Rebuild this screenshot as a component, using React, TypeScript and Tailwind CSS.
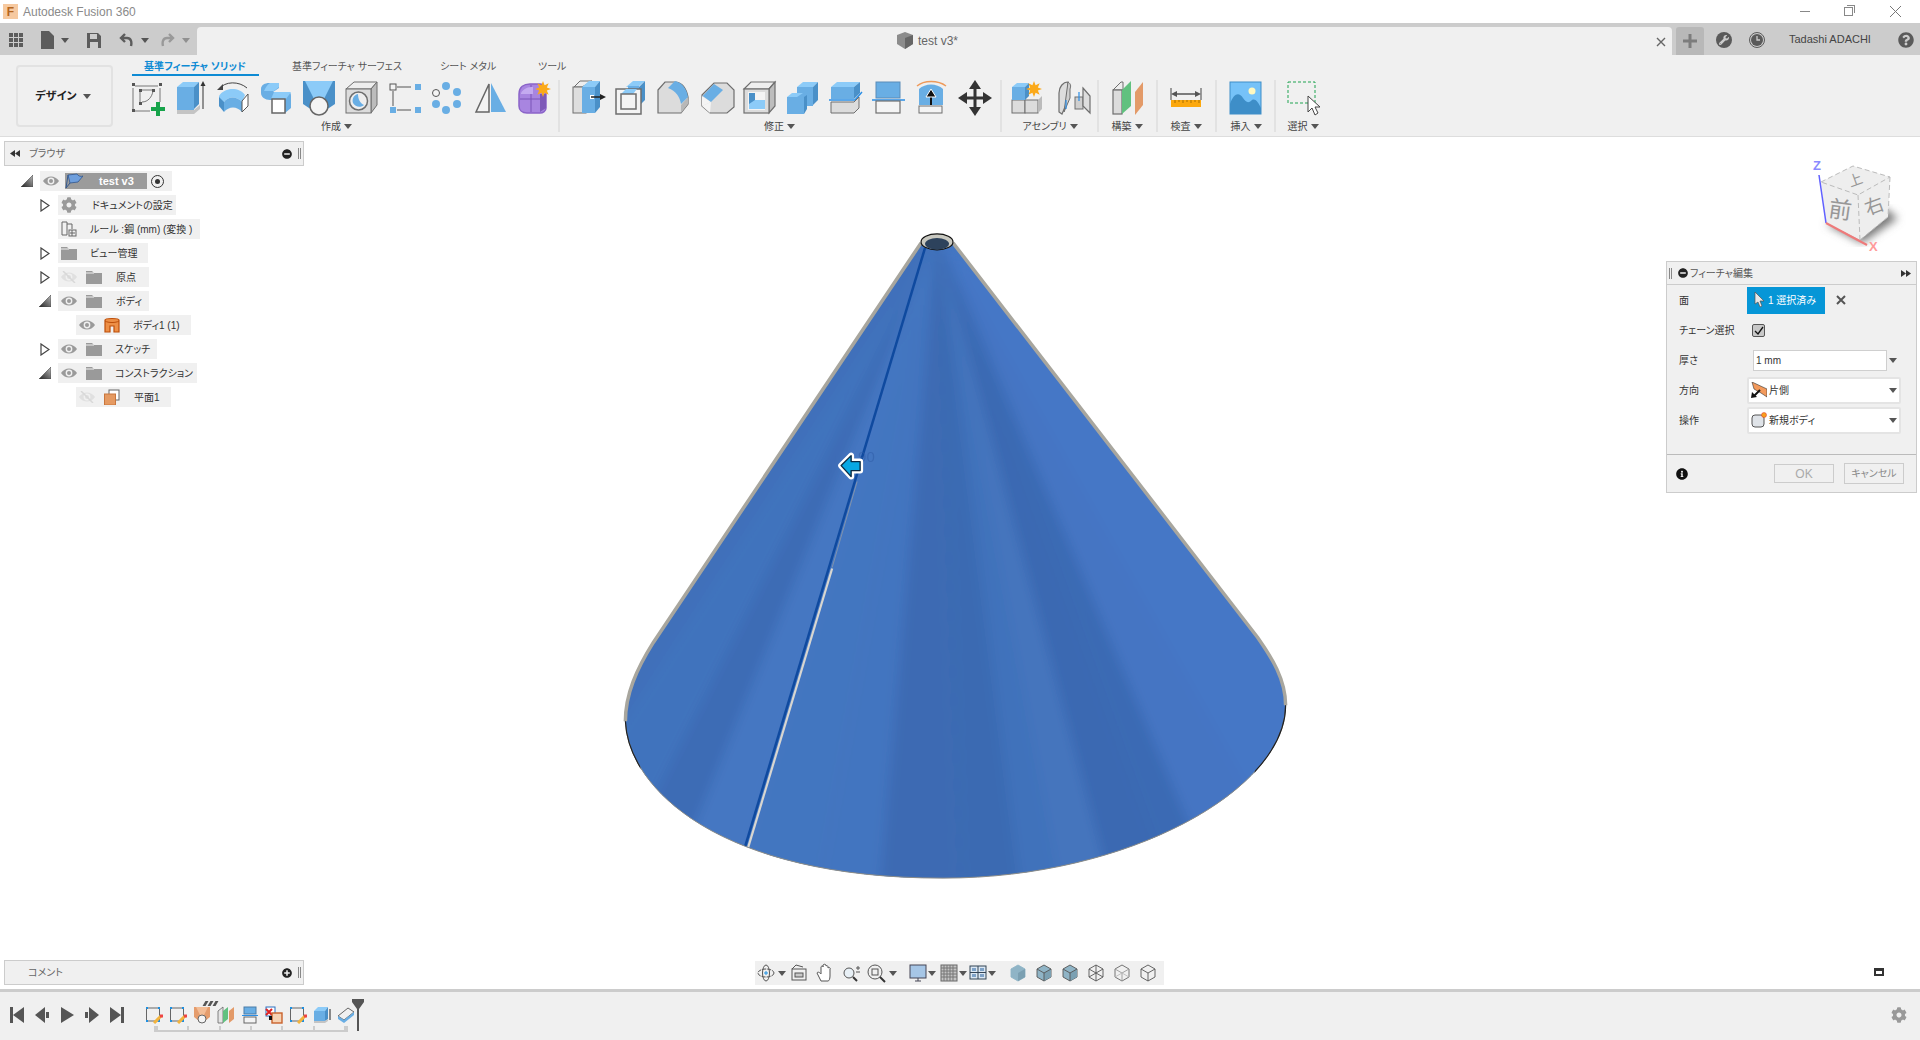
import React from "react";
import { FaCog, FaInfoCircle, FaMinusCircle, FaPlusCircle, FaQuestionCircle, FaWrench } from "react-icons/fa";

const B = "#69aee4";
const D = "#4a90c8";
const L = "#8ccbf8";
const G = "#6e6e6e";

const Ico = ({ children, s = 36, v = 36, className = "" }: { children: React.ReactNode; s?: number; v?: number; className?: string }) => (
    <svg width={s} height={s} viewBox={`0 0 ${v} ${v}`} className={`shrink-0 ${className}`}>
        {children}
    </svg>
);

const Star = ({ x, y, r }: { x: number; y: number; r: number }) => {
    const pts: string[] = [];
    for (let i = 0; i < 16; i++) {
        const a = (i * Math.PI) / 8;
        const q = i % 2 === 0 ? r : r * 0.52;
        pts.push(`${x + q * Math.cos(a)},${y + q * Math.sin(a)}`);
    }
    return <polygon points={pts.join(" ")} fill="#fba919" />;
};

const CREATE_ICONS = [
    <Ico key="sketch">
        <path d="M6 6H29M4 8V29M6 31H21M31 8V22" stroke="#777" fill="none" />
        <path d="M11 10H23M11 12V22M13 22C19 22 23 17 24 11" stroke="#777" fill="none" />
        {[[3, 3], [30, 3], [3, 29], [10, 9], [23, 9], [10, 22]].map(([x, y]) => (
            <rect key={`${x}-${y}`} x={x} y={y} width="3" height="3" fill="#555" />
        ))}
        <path d="M27 22h4v5h5v4h-5v5h-4v-5h-5v-4h5z" fill="#16a34a" />
    </Ico>,
    <Ico key="extrude">
        <polygon points="5,7 11,2 27,2 22,7" fill={L} />
        <polygon points="22,7 27,2 27,24 22,29" fill={D} />
        <rect x="5" y="7" width="17" height="23" fill={B} />
        <polygon points="5,30 22,30 28,25 28,29 22,34 5,34" fill="#c4c4c4" />
        <path d="M31 29V4" stroke="#333" />
        <polygon points="31,1 28.5,6 33.5,6" fill="#333" />
    </Ico>,
    <Ico key="revolve">
        <path d="M4 9C10 1 24 1 32 8" stroke="#444" fill="none" />
        <polygon points="2,10 8,4 8,10" fill="#444" />
        <path d="M4 16C10 7 24 7 30 15L27 22C22 16 13 16 9 22V30L4 26Z" fill={L} />
        <path d="M9 22C13 16 22 16 27 22V32C22 26 14 26 9 32Z" fill={B} />
        <path d="M4 17V26L9 32V22Z" fill={D} />
        <polygon points="27,21 33,14 33,26 27,32" fill="#fff" stroke="#555" />
    </Ico>,
    <Ico key="sweep">
        <path d="M3 9C3 5 7 3 11 3H21V8L15 12H29C33 12 33 14 33 16V28L27 33V20H12C7 20 3 17 3 13Z" fill={B} />
        <path d="M12 3H21V7L16 11H6C8 7 9 5 12 3Z" fill={L} />
        <path d="M16 12H33L28 19H13Z" fill={L} />
        <rect x="14" y="19" width="13" height="14" fill="#fff" stroke="#666" strokeWidth="1.5" />
    </Ico>,
    <Ico key="loft">
        <polygon points="2,1 34,1 34,24 25,30 11,30 2,24" fill={D} />
        <polygon points="4,1 32,1 23,19 13,19" fill={L} />
        <circle cx="18" cy="26" r="9" fill="#f4f4f4" stroke="#666" strokeWidth="1.5" />
    </Ico>,
    <Ico key="hole">
        <polygon points="2,9 10,2 33,2 27,9" fill="#eee" stroke={G} />
        <polygon points="27,9 33,2 33,25 27,33" fill="#bcbcbc" stroke={G} />
        <rect x="2" y="9" width="25" height="24" fill="#dcdcdc" stroke={G} />
        <circle cx="14.5" cy="21" r="9" fill="#eee" stroke={G} strokeWidth="1.5" />
        <path d="M14 14C9 15 8 20 9 23C11 27 17 28 20 25C16 23 14 19 14 14Z" fill={B} />
    </Ico>,
    <Ico key="rect-pattern">
        <rect x="3" y="4" width="6" height="6" fill="#f4f4f4" stroke="#555" />
        <rect x="28" y="4" width="6" height="6" fill={B} />
        <rect x="3" y="27" width="6" height="6" fill={B} />
        <rect x="28" y="27" width="6" height="6" fill={B} />
        <path d="M10 7H24M6 11V26M10 30H24" stroke="#555" />
    </Ico>,
    <Ico key="circ-pattern">
        <circle cx="6" cy="13" r="3.5" fill="#f4f4f4" stroke="#555" />
        <circle cx="16" cy="6" r="4" fill={B} />
        <circle cx="27" cy="12" r="4" fill={B} />
        <circle cx="27" cy="24" r="4" fill={B} />
        <circle cx="16" cy="30" r="4" fill={B} />
        <circle cx="6" cy="24" r="4" fill={B} />
    </Ico>,
    <Ico key="mirror">
        <polygon points="16,4 16,32 3,32" fill="#f4f4f4" stroke="#666" strokeWidth="1.5" />
        <polygon points="18,3 18,32 33,32" fill={B} />
    </Ico>,
    <Ico key="form">
        <path d="M3 14C3 7 8 4 14 4H24C27 4 30 7 30 12V28C30 31 27 33 24 33H11C6 33 3 30 3 26Z" fill="#a885e0" stroke="#8a63c8" strokeWidth="1.5" />
        <path d="M4 19H29M15 5V32" stroke="#7b55b8" />
        <path d="M5 13C8 8 12 7 17 7V14H5Z" fill="#c4aaf0" />
        <path d="M24 14H30V28L24 32Z" fill="#7d59b8" />
        <Star x={27} y={9} r={8} />
    </Ico>,
];

const MODIFY_ICONS = [
    <Ico key="press-pull">
        <polygon points="4,7 10,1 22,1 12,7" fill="#eee" stroke={G} />
        <rect x="3" y="7" width="13" height="26" fill="#dedede" stroke={G} />
        <polygon points="12,7 19,1 30,1 25,7" fill={L} />
        <polygon points="25,7 30,1 30,27 25,33" fill={D} />
        <rect x="12" y="7" width="13" height="26" fill={B} />
        <rect x="20" y="15" width="4" height="4" fill="#fff" />
        <path d="M21 17H31" stroke="#222" strokeWidth="1.5" />
        <polygon points="36,17 30,14 30,20" fill="#222" />
    </Ico>,
    <Ico key="fillet-shell">
        <polygon points="13,7 20,1 32,1 25,7" fill={L} />
        <polygon points="26,7 32,1 32,20 26,26" fill={D} />
        <rect x="15" y="6" width="11" height="20" fill={B} />
        <rect x="3" y="9" width="25" height="25" fill="#f4f4f4" stroke={G} strokeWidth="1.5" />
        <polygon points="8,14 13,9 24,9 20,14" fill={L} />
        <rect x="8" y="14" width="15" height="15" fill="#f4f4f4" stroke={G} strokeWidth="1.5" />
    </Ico>,
    <Ico key="fillet">
        <path d="M2 10L9 2H20C28 3 31 12 32 17V24L25 33H2Z" fill="#dcdcdc" stroke={G} strokeWidth="1.2" />
        <path d="M25 33V25L32 17V24Z" fill="#b8b8b8" />
        <path d="M12 8L19 1C27 3 31 10 32 17L25 24C24 17 20 11 12 8Z" fill={B} />
    </Ico>,
    <Ico key="chamfer">
        <path d="M3 15L15 3H28L35 10V27L28 33H11L3 26Z" fill="#dcdcdc" stroke={G} strokeWidth="1.2" />
        <polygon points="3,26 3,16 12,22" fill="#f4f4f4" />
        <polygon points="3,26 12,22 11,33" fill="#f4f4f4" />
        <polygon points="3.7,16 15,4 24,10 12,22" fill={B} />
    </Ico>,
    <Ico key="shell">
        <polygon points="2,9 9,2 33,2 27,9" fill="#eee" stroke={G} strokeWidth="1.2" />
        <polygon points="27,9 33,2 33,26 27,33" fill="#bdbdbd" stroke={G} strokeWidth="1.2" />
        <rect x="2" y="9" width="25" height="24" fill="#dcdcdc" stroke={G} strokeWidth="1.2" />
        <rect x="6" y="12" width="17" height="18" fill="#f4f4f4" />
        <rect x="7" y="13" width="6" height="11" fill={D} />
        <polygon points="7,24 13,20 23,20 23,29 7,29" fill={L} />
    </Ico>,
    <Ico key="combine">
        <polygon points="12,7 18,2 33,2 28,7" fill={L} />
        <polygon points="28,7 33,2 33,20 28,25" fill={D} />
        <rect x="12" y="7" width="16" height="19" fill={B} />
        <polygon points="2,17 7,13 18,13 12,17" fill={L} />
        <rect x="2" y="17" width="17" height="17" fill={B} />
        <polygon points="19,17 22,15 22,29 19,34" fill={D} />
    </Ico>,
    <Ico key="split-face">
        <polygon points="3,7 9,2 32,2 26,7" fill={L} />
        <polygon points="26,7 32,2 32,13 26,19" fill={D} />
        <rect x="3" y="7" width="23" height="12" fill={B} />
        <path d="M1 20H27L34 12" stroke="#2a8ee6" strokeWidth="1.5" fill="none" />
        <polygon points="3,22 26,22 31,17 31,28 26,33 3,33" fill="#dcdcdc" stroke={G} />
    </Ico>,
    <Ico key="split-body">
        <rect x="5" y="2" width="24" height="16" fill={B} stroke="#5a8cb8" />
        <path d="M1 20H34" stroke="#2a8ee6" strokeWidth="1.5" />
        <rect x="5" y="21" width="24" height="12" fill="#f4f4f4" stroke={G} strokeWidth="1.2" />
    </Ico>,
    <Ico key="offset">
        <path d="M3 6C10 0 24 0 32 6" stroke="#ee9a5b" strokeWidth="1.5" fill="none" />
        <path d="M5 25V9C11 3 23 3 29 9V25Z" fill={B} />
        <path d="M5 26H29" stroke="#fff" />
        <rect x="5" y="26" width="23" height="7" fill="#f4f4f4" stroke={G} />
        <path d="M17 25V15" stroke="#111" strokeWidth="2" />
        <polygon points="17,9 12,17 22,17" fill="#111" stroke="#fff" />
    </Ico>,
    <Ico key="move">
        <path d="M18 4V32M4 18H32" stroke="#333" strokeWidth="3" />
        <polygon points="18,0 12,9 24,9" fill="#333" />
        <polygon points="18,36 12,27 24,27" fill="#333" />
        <polygon points="1,18 10,12 10,24" fill="#333" />
        <polygon points="35,18 26,12 26,24" fill="#333" />
    </Ico>,
];

const ASSEMBLY_ICONS = [
    <Ico key="new-comp">
        <rect x="3" y="20" width="13" height="13" fill="#dcdcdc" stroke={G} />
        <rect x="16" y="20" width="13" height="13" fill="#dcdcdc" stroke={G} />
        <polygon points="29,20 33,16 33,29 29,33" fill="#bbb" />
        <polygon points="3,7 8,3 20,3 16,7" fill={L} />
        <polygon points="16,7 20,3 20,16 16,20" fill={D} />
        <rect x="3" y="7" width="13" height="13" fill={B} />
        <Star x={25} y={9} r={8} />
    </Ico>,
    <Ico key="joint">
        <path d="M4 32V13C4 7 8 2 13 2V20L7 34Z" fill="#ddd" stroke={G} strokeWidth="1.2" />
        <path d="M13 2C16 4 16 6 15 9V18L9 32Z" fill="#cfcfcf" stroke={G} />
        <rect x="20" y="17" width="8" height="12" fill="#cfcfcf" stroke={G} />
        <polygon points="28,8 35,16 35,33 28,26" fill="#ddd" stroke={G} strokeWidth="1.2" />
        <path d="M11 20V29M24 12V21" stroke="#2a8ee6" strokeWidth="1.2" />
    </Ico>,
];

const CONSTRUCT_ICON = (
    <Ico>
        <polygon points="4,10 12,2 14,2 14,10" fill="#eee" stroke={G} />
        <rect x="4" y="10" width="9" height="24" fill="#dcdcdc" stroke={G} strokeWidth="1.2" />
        <polygon points="13,10 22,1 22,26 13,34" fill="#61c17f" />
        <polygon points="26,12 34,2 34,25 26,35" fill="#e39a68" />
    </Ico>
);

const MEASURE_ICON = (
    <Ico>
        <path d="M3 8V20M33 8V20" stroke="#444" />
        <path d="M6 14H30" stroke="#555" strokeWidth="1.5" />
        <polygon points="3,14 9,11 9,17" fill="#555" />
        <polygon points="33,14 27,11 27,17" fill="#555" />
        <rect x="3" y="20" width="30" height="7" fill="#fca80d" />
        <path d="M7 20v3M11 20v2M15 20v3M19 20v2M23 20v3M27 20v2M31 20v3" stroke="#a76f00" />
    </Ico>
);

const INSERT_ICON = (
    <Ico>
        <rect x="2" y="2" width="31" height="32" fill="#76c2f8" />
        <circle cx="24" cy="11" r="3.5" fill="#fff8c0" />
        <path d="M2 24C6 13 11 12 15 18C18 22 20 24 24 20C28 18 31 24 33 28V34H2Z" fill="#3e8ec8" />
        <rect x="2" y="2" width="31" height="32" fill="none" stroke="#3e8ec8" />
    </Ico>
);

const SELECT_ICON = (
    <Ico>
        <rect x="3" y="2" width="27" height="21" fill="none" stroke="#1fa350" strokeDasharray="3 2" />
        <polygon points="23,16 23,32 27,28 30,35 33,33 30,27 35,27" fill="#fff" stroke="#444" />
    </Ico>
);

const Caret = ({ className = "" }: { className?: string }) => (
    <svg width="8" height="5" viewBox="0 0 8 5" className={`inline-block shrink-0 ${className}`}>
        <polygon points="0,0 8,0 4,5" fill="#555" />
    </svg>
);

const GROUPS = [
    { label: "作成", w: "w-[430px]", ml: "", icons: CREATE_ICONS, slot: "w-[43px]", div: "-right-[5px]", lbl: "pr-[7px]" },
    { label: "修正", w: "w-[430px]", ml: "ml-[11px]", icons: MODIFY_ICONS, slot: "w-[43px]", div: "-right-[6px]", lbl: "pr-[3px]" },
    { label: "アセンブリ", w: "w-[92px]", ml: "ml-[8px]", icons: ASSEMBLY_ICONS, slot: "w-[46px]", div: "-right-[3px]", lbl: "" },
    { label: "構築", w: "w-[54px]", ml: "ml-[4px]", icons: [CONSTRUCT_ICON], slot: "w-[54px]", div: "-right-[4px]", lbl: "" },
    { label: "検査", w: "w-[54px]", ml: "ml-[5px]", icons: [MEASURE_ICON], slot: "w-[54px]", div: "-right-[4px]", lbl: "" },
    { label: "挿入", w: "w-[54px]", ml: "ml-[6px]", icons: [INSERT_ICON], slot: "w-[54px]", div: "-right-[3px]", lbl: "" },
    { label: "選択", w: "w-[54px]", ml: "ml-[3px]", icons: [SELECT_ICON], slot: "w-[54px]", div: "hidden", lbl: "" },
];

const TitleBar = () => (
    <div className="flex h-[23px] items-center bg-white">
        <div className="ml-[3px] flex h-[15px] w-[15px] items-center justify-center bg-[#f6c9a0] text-[12px] font-bold text-[#b5651d]">F</div>
        <span className="ml-[5px] text-[12px] text-[#8a8a8a]">Autodesk Fusion 360</span>
        <div className="ml-auto flex items-center text-[#777]">
            <div className="h-px w-[10px] bg-[#888]" />
            <div className="relative ml-[34px] h-[9px] w-[9px] border border-[#888]">
                <div className="absolute -right-[3px] -top-[3px] h-[8px] w-[8px] border-r border-t border-[#888]" />
            </div>
            <svg width="11" height="11" viewBox="0 0 11 11" className="ml-[37px] mr-[19px]">
                <path d="M0 0L11 11M11 0L0 11" stroke="#777" />
            </svg>
        </div>
    </div>
);

const TabRow = () => (
    <div className="flex h-[28px] bg-[#cccccc]">
        <div className="flex w-[197px] items-center pb-[2px] text-[#666]">
            <svg width="14" height="14" viewBox="0 0 14 14" className="ml-[9px]" fill="#5c5c5c">
                {[0, 5, 10].flatMap((x) => [0, 5, 10].map((y) => <rect key={`${x}${y}`} x={x} y={y} width="4" height="4" />))}
            </svg>
            <svg width="14" height="18" viewBox="0 0 14 18" className="ml-[18px]" fill="#5c5c5c">
                <path d="M0 0H8L13 5V18H0Z" />
            </svg>
            <Caret className="ml-[6px]" />
            <svg width="14" height="15" viewBox="0 0 14 15" className="ml-[18px]" fill="#5c5c5c">
                <path d="M0 0H11L14 3V15H0ZM3 1V6H10V1ZM3 9V15H11V9Z" fillRule="evenodd" />
            </svg>
            <svg width="14" height="14" viewBox="0 0 14 14" className="ml-[18px]" fill="none" stroke="#5c5c5c" strokeWidth="2.4">
                <path d="M6 1L2 5L6 9M2 5H8C12 5 13 9 12 13" />
            </svg>
            <Caret className="ml-[8px]" />
            <svg width="14" height="14" viewBox="0 0 14 14" className="ml-[12px]" fill="none" stroke="#999" strokeWidth="2.4">
                <path d="M8 1L12 5L8 9M12 5H6C2 5 1 9 2 13" />
            </svg>
            <Caret className="ml-[7px] opacity-50" />
        </div>
        <div className="relative flex w-[1475px] items-center justify-center rounded-t-[4px] bg-[#f0f0f0] pb-[1px] pr-[14px]">
            <svg width="16" height="17" viewBox="0 0 16 17">
                <polygon points="0,3 8,0 16,3 16,12 8,17 0,12" fill="#8c8c8c" />
                <polygon points="8,6 16,3 16,12 8,17" fill="#666" />
            </svg>
            <span className="ml-[5px] text-[12px] text-[#666]">test v3*</span>
            <svg width="10" height="10" viewBox="0 0 10 10" className="absolute right-[6px] top-[10px]">
                <path d="M1 1L9 9M9 1L1 9" stroke="#666" strokeWidth="1.4" />
            </svg>
        </div>
        <div className="ml-[4px] flex w-[28px] items-center justify-center rounded-t-[3px] bg-[#b8b8b8]">
            <svg width="14" height="14" viewBox="0 0 14 14">
                <path d="M7 0V14M0 7H14" stroke="#7c7c7c" strokeWidth="3" />
            </svg>
        </div>
        <div className="flex flex-1 items-center pb-[3px] text-[#5a5a5a]">
            <div className="ml-[12px] flex h-4 w-4 items-center justify-center rounded-full bg-[#5a5a5a]">
                <FaWrench size={10} color="#ccc" />
            </div>
            <svg width="16" height="16" viewBox="0 0 16 16" className="ml-[17px]">
                <circle cx="8" cy="8" r="7.5" fill="none" stroke="#5a5a5a" />
                <circle cx="8" cy="8" r="6" fill="#5a5a5a" />
                <path d="M8 4V8H11" stroke="#ccc" strokeWidth="1.3" fill="none" />
            </svg>
            <span className="ml-[24px] text-[11px] text-[#444]">Tadashi ADACHI</span>
            <FaQuestionCircle size={16} color="#5a5a5a" className="ml-[27px]" />
        </div>
    </div>
);

const Ribbon = () => (
    <div className="flex h-[82px] border-b border-[#dddddd] bg-[#f0f0f0]">
        <div className="ml-[16px] mt-[10px] flex h-[62px] w-[97px] items-center justify-center gap-[6px] rounded-[4px] border-2 border-[#e2e2e2] pr-[3px] text-[11px] font-bold text-[#222]">
            デザイン
            <Caret />
        </div>
        <div className="ml-[12px] flex flex-col">
            <div className="relative flex h-[25px] items-center pb-[3px] text-[10px] text-[#555]">
                <span className="ml-[19px] w-[102px] whitespace-nowrap font-bold text-[#0e8bd4]">基準フィーチャ ソリッド</span>
                <span className="ml-[46px] w-[102px] whitespace-nowrap">基準フィーチャ サーフェス</span>
                <span className="ml-[46px] w-[52px] whitespace-nowrap">シート メタル</span>
                <span className="ml-[46px] whitespace-nowrap">ツール</span>
                <div className="absolute left-[7px] top-[19px] h-[2px] w-[127px] bg-[#0e8bd4]" />
            </div>
            <div className="flex">
                {GROUPS.map((g) => (
                    <div key={g.label} className={`relative flex shrink-0 flex-col ${g.w} ${g.ml}`}>
                        <div className="flex h-[36px] items-center">
                            {g.icons.map((icon, n) => (
                                <div key={n} className={`flex shrink-0 justify-center ${g.slot}`}>
                                    {icon}
                                </div>
                            ))}
                        </div>
                        <div className={`mt-[3px] flex h-[14px] items-center justify-center gap-[3px] text-[10px] text-[#444] ${g.lbl}`}>
                            {g.label}
                            <Caret />
                        </div>
                        <div className={`absolute top-0 h-[52px] w-[2px] bg-[#e2e2e2] ${g.div}`} />
                    </div>
                ))}
            </div>
        </div>
    </div>
);

const Eye = ({ off = false }: { off?: boolean }) => (
    <svg width="16" height="12" viewBox="0 0 16 12" className="shrink-0">
        <path d="M0 6C4 0 12 0 16 6C12 12 4 12 0 6Z" fill={off ? "#e0e0e0" : "#9a9a9a"} />
        <circle cx="8" cy="6" r="3.4" fill="#f0f0f0" />
        <circle cx="8" cy="6" r="2" fill={off ? "#e0e0e0" : "#9a9a9a"} />
        {off && <path d="M2 0L14 12" stroke="#d8d8d8" strokeWidth="1.5" />}
    </svg>
);

const Folder = () => (
    <svg width="16" height="13" viewBox="0 0 16 13" className="shrink-0">
        <path d="M0 0H6L8 2H16V13H0Z" fill="#9a9a9a" />
        <path d="M0 2H8" stroke="#f0f0f0" />
    </svg>
);

const Arrow = ({ open }: { open: boolean }) =>
    open ? (
        <svg width="12" height="12" viewBox="0 0 12 12" className="shrink-0">
            <defs>
                <linearGradient id="tri" x1="0" y1="1" x2="1" y2="0">
                    <stop offset="0" stopColor="#222" />
                    <stop offset="1" stopColor="#bbb" />
                </linearGradient>
            </defs>
            <polygon points="0,12 12,0 12,12" fill="url(#tri)" stroke="#444" strokeWidth="0.6" />
        </svg>
    ) : (
        <svg width="10" height="13" viewBox="0 0 10 13" className="mx-px shrink-0">
            <polygon points="1,1 9,6.5 1,12" fill="#fff" stroke="#444" strokeWidth="1.2" />
        </svg>
    );

const BodyIcon = () => (
    <svg width="16" height="16" viewBox="0 0 16 16" className="shrink-0">
        <path d="M1 3C1 1 15 1 15 3V15H10V9H6V15H1Z" fill="#ed8f46" stroke="#bd4e09" strokeWidth="1.2" />
        <path d="M1 4C4 6 12 6 15 4" stroke="#bd4e09" fill="none" />
    </svg>
);

const PlaneIcon = () => (
    <svg width="16" height="16" viewBox="0 0 16 16" className="shrink-0">
        <rect x="5" y="1" width="10" height="10" fill="#fff" stroke="#666" />
        <rect x="0.5" y="5" width="11" height="11" fill="#e59a62" stroke="#c9763d" />
    </svg>
);

const RuleIcon = () => (
    <svg width="16" height="16" viewBox="0 0 16 16" className="shrink-0" fill="none" stroke="#666">
        <path d="M1 1H6V14H1ZM6 3H11V8" />
        <rect x="8" y="9" width="7" height="6" fill="#f0f0f0" />
        <path d="M9 12H14M11 9V15" />
    </svg>
);

const RootIcon = () => (
    <svg width="18" height="16" viewBox="0 0 18 16" className="shrink-0">
        <path d="M3 2L12 1C13 3 16 4 18 3L13 9L5 10Z" fill="#6f9fdd" stroke="#31578f" strokeWidth="0.8" />
        <path d="M3 2L1 15M5 10L1 15" stroke="#31578f" />
    </svg>
);

const TREE = [
    { id: "doc", arrow: false, indent: "ml-[35px]", w: "w-[118px]", icon: <FaCog size={16} color="#9a9a9a" className="shrink-0" />, eye: null, label: "ドキュメントの設定", text: "ml-[15px]" },
    { id: "rule", arrow: null, indent: "ml-[54px]", w: "w-[142px]", icon: <RuleIcon />, eye: null, label: "ルール :鋼 (mm) (変換 )", text: "ml-[13px]" },
    { id: "view", arrow: false, indent: "ml-[35px]", w: "w-[90px]", icon: <Folder />, eye: null, label: "ビュー管理", text: "ml-[13px]" },
    { id: "origin", arrow: false, indent: "ml-[35px]", w: "w-[91px]", icon: <Folder />, eye: "off", label: "原点", text: "ml-[14px]" },
    { id: "bodies", arrow: true, indent: "ml-[35px]", w: "w-[91px]", icon: <Folder />, eye: "on", label: "ボディ", text: "ml-[14px]" },
    { id: "body", arrow: null, indent: "ml-[72px]", w: "w-[115px]", icon: <BodyIcon />, eye: "on", label: "ボディ1 (1)", text: "ml-[13px]" },
    { id: "sketch", arrow: false, indent: "ml-[35px]", w: "w-[99px]", icon: <Folder />, eye: "on", label: "スケッチ", text: "ml-[13px]" },
    { id: "con", arrow: true, indent: "ml-[35px]", w: "w-[139px]", icon: <Folder />, eye: "on", label: "コンストラクション", text: "ml-[13px]" },
    { id: "plane", arrow: null, indent: "ml-[72px]", w: "w-[95px]", icon: <PlaneIcon />, eye: "off", label: "平面1", text: "ml-[14px]" },
];

const PanelHandle = () => <div className="ml-[6px] h-[11px] w-[3px] border-x border-[#888]" />;

const BrowserPanel = () => (
    <div className="absolute left-[4px] top-[4px] w-[300px] text-[10px] text-[#333]">
        <div className="flex h-[25px] items-center border border-[#cccccc] bg-[#f0f0f0] pl-[5px] pr-[2px] text-[#666]">
            <svg width="10" height="7" viewBox="0 0 10 7">
                <polygon points="5,0 0,3.5 5,7" fill="#333" />
                <polygon points="10,0 5,3.5 10,7" fill="#333" />
            </svg>
            <span className="ml-[9px]">ブラウザ</span>
            <FaMinusCircle size={10} color="#222" className="ml-auto" />
            <PanelHandle />
        </div>
        <div className="mt-[5px] flex flex-col gap-[4px]">
            <div className="flex h-[20px] items-center">
                <div className="ml-[17px] w-[19px]">
                    <Arrow open />
                </div>
                <div className="flex h-[20px] w-[132px] items-center bg-[#f0f0f0] pl-[3px]">
                    <Eye />
                    <div className="ml-[6px] flex h-[16px] w-[82px] items-center bg-[#9b9b9b]">
                        <RootIcon />
                        <span className="ml-[16px] text-[11px] font-bold text-white">test v3</span>
                    </div>
                    <div className="ml-[4px] flex h-[13px] w-[13px] items-center justify-center rounded-full border border-[#333]">
                        <div className="h-[5px] w-[5px] rounded-full bg-[#333]" />
                    </div>
                </div>
            </div>
            {TREE.map((row) => (
                <div key={row.id} className="flex h-[20px] items-center">
                    <div className={`flex items-center ${row.indent}`}>
                        {row.arrow !== null && (
                            <div className="w-[19px]">
                                <Arrow open={row.arrow} />
                            </div>
                        )}
                    </div>
                    <div className={`flex h-[20px] items-center bg-[#f0f0f0] pl-[3px] ${row.w}`}>
                        {row.eye && <Eye off={row.eye === "off"} />}
                        <div className={row.eye ? "ml-[9px]" : ""}>{row.icon}</div>
                        <span className={`${row.text} whitespace-nowrap`}>{row.label}</span>
                    </div>
                </div>
            ))}
        </div>
    </div>
);

const CommentPanel = () => (
    <div className="absolute left-[4px] top-[823px] flex h-[25px] w-[300px] items-center border border-[#cccccc] bg-[#f0f0f0] pl-[23px] pr-[2px] text-[10px] text-[#666]">
        コメント
        <FaPlusCircle size={10} color="#222" className="ml-auto" />
        <PanelHandle />
    </div>
);

const DirectionIcon = () => (
    <svg width="16" height="16" viewBox="0 0 16 16" className="shrink-0">
        <polygon points="1,0 16,7 16,15 10,11 3,7" fill="#f39a5c" stroke="#333" strokeWidth="0.6" />
        <path d="M9 8L3 14" stroke="#111" strokeWidth="2" />
        <polygon points="0,16 6,15 1,10" fill="#111" />
    </svg>
);

const NewBodyIcon = () => (
    <svg width="16" height="16" viewBox="0 0 16 16" className="shrink-0">
        <rect x="1" y="3" width="12" height="12" rx="3" fill="#dfe3e8" stroke="#555" />
        <circle cx="13" cy="3" r="2.5" fill="#f9a01b" stroke="#d33" strokeWidth="0.5" />
    </svg>
);

const FeatureRow = ({ label, children }: { label: string; children: React.ReactNode }) => (
    <div className="flex h-[30px] items-center pl-[12px]">
        <span className="w-[68px] shrink-0">{label}</span>
        {children}
    </div>
);

const Select = ({ icon, text }: { icon: React.ReactNode; text: string }) => (
    <div className="flex h-[27px] w-[154px] items-center rounded-[2px] border-2 border-[#e4e4e4] bg-white pl-[2px] pr-[2px]">
        {icon}
        <span className="ml-[2px]">{text}</span>
        <Caret className="ml-auto" />
    </div>
);

const FeaturePanel = () => (
    <div className="absolute left-[1666px] top-[124px] flex h-[232px] w-[251px] flex-col border border-[#cccccc] bg-[#f0f0f0] text-[10px] text-[#333]">
        <div className="flex h-[23px] shrink-0 items-center border-b border-[#cccccc] pl-[2px] pr-[5px] text-[#555]">
            <div className="h-[11px] w-[3px] border-x border-[#888]" />
            <FaMinusCircle size={10} color="#222" className="ml-[6px]" />
            <span className="ml-[2px]">フィーチャ編集</span>
            <svg width="10" height="7" viewBox="0 0 10 7" className="ml-auto">
                <polygon points="0,0 5,3.5 0,7" fill="#333" />
                <polygon points="5,0 10,3.5 5,7" fill="#333" />
            </svg>
        </div>
        <FeatureRow label="面">
            <div className="flex h-[27px] w-[78px] items-center bg-[#0696d7] pl-[7px] text-white">
                <svg width="11" height="16" viewBox="0 0 11 16">
                    <polygon points="1,0 1,12 4,10 6,15 8,14 6,9 10,9" fill="#e8e8e8" stroke="#555" strokeWidth="0.7" />
                </svg>
                <span className="ml-[3px] whitespace-nowrap">1 選択済み</span>
            </div>
            <svg width="10" height="10" viewBox="0 0 10 10" className="ml-[11px]">
                <path d="M1 1L9 9M9 1L1 9" stroke="#555" strokeWidth="2" />
            </svg>
        </FeatureRow>
        <FeatureRow label="チェーン選択">
            <div className="ml-[5px] flex h-[13px] w-[13px] items-center justify-center rounded-[2px] border border-[#555] bg-[#c8c8c8]">
                <svg width="10" height="9" viewBox="0 0 10 9">
                    <path d="M1 5L4 8L9 1" stroke="#111" fill="none" strokeWidth="1.3" />
                </svg>
            </div>
        </FeatureRow>
        <FeatureRow label="厚さ">
            <div className="ml-[6px] flex h-[21px] w-[134px] items-center border border-[#cfcfcf] bg-white pl-[2px]">1 mm</div>
            <Caret className="ml-[2px]" />
        </FeatureRow>
        <FeatureRow label="方向">
            <Select icon={<DirectionIcon />} text="片側" />
        </FeatureRow>
        <FeatureRow label="操作">
            <Select icon={<NewBodyIcon />} text="新規ボディ" />
        </FeatureRow>
        <div className="mt-[19px] flex flex-1 items-center border-t border-[#bbbbbb] pl-[9px]">
            <FaInfoCircle size={12} color="#111" />
            <div className="ml-[86px] flex h-[19px] w-[60px] items-center justify-center border border-[#cccccc] text-[12px] text-[#aaa]">OK</div>
            <div className="ml-[10px] flex h-[21px] w-[60px] items-center justify-center border border-[#cccccc] text-[#888]">キャンセル</div>
        </div>
    </div>
);

const NavIcon = ({ children, className = "" }: { children: React.ReactNode; className?: string }) => (
    <svg width="20" height="20" viewBox="0 0 20 20" className={`shrink-0 ${className}`}>
        {children}
    </svg>
);

const NavCube = ({ fill, wire, className }: { fill: boolean; wire: boolean; className: string }) => (
    <NavIcon className={className}>
        <polygon points="10,2 17,6 17,14 10,18 3,14 3,6" fill={fill ? "#8fb4c6" : "none"} stroke={wire ? "#555" : fill ? "#8fb4c6" : "#555"} strokeWidth="0.9" />
        {fill && <polygon points="10,10 17,6 17,14 10,18" fill="#7ba0b2" />}
        {wire && <path d="M3 6L10 10L17 6M10 10V18" stroke="#555" strokeWidth="0.9" fill="none" />}
    </NavIcon>
);

const BottomNav = () => (
    <div className="absolute left-[755px] top-[824px] flex h-[24px] w-[409px] items-center bg-[#f0f0f0] pl-px">
        <NavIcon>
            <ellipse cx="10" cy="10" rx="8" ry="4" fill="none" stroke="#555" strokeDasharray="4 1" />
            <ellipse cx="10" cy="10" rx="3.5" ry="8" fill="none" stroke="#555" />
            <path d="M8 10H12M10 8V12" stroke="#1d8fe0" />
        </NavIcon>
        <Caret className="ml-[2px]" />
        <NavIcon className="ml-[3px]">
            <rect x="3" y="6" width="14" height="11" fill="none" stroke="#555" />
            <rect x="6" y="10" width="8" height="4" fill="#c8c8c8" stroke="#555" />
            <path d="M3 6L7 2L14 4" stroke="#555" fill="none" />
        </NavIcon>
        <NavIcon className="ml-[6px]">
            <path d="M6 18L2 10C3 8 5 10 6 11V4C7 2 8 3 8 4V2C9 1 10 1 11 2V3C12 2 13 3 13 4V5C14 4 16 5 15 6V13C15 16 14 18 13 18Z" fill="#fff" stroke="#555" />
        </NavIcon>
        <NavIcon className="ml-[6px]">
            <circle cx="8" cy="10" r="5" fill="#e8f0f6" stroke="#555" />
            <path d="M12 14L16 18" stroke="#333" strokeWidth="2" />
            <path d="M15 5H19M17 3V7M15 9H19" stroke="#555" />
        </NavIcon>
        <NavIcon className="ml-[5px]">
            <circle cx="9" cy="9" r="7" fill="none" stroke="#555" />
            <rect x="6" y="6" width="6" height="6" fill="none" stroke="#555" />
            <path d="M14 14L19 19" stroke="#333" strokeWidth="2" />
        </NavIcon>
        <Caret className="ml-[3px]" />
        <NavIcon className="ml-[11px]">
            <rect x="2" y="2" width="16" height="13" fill="#a6c6e6" stroke="#445" />
            <path d="M7 18H13M10 15V18" stroke="#445" />
        </NavIcon>
        <Caret />
        <NavIcon className="ml-[3px]">
            <rect x="2" y="2" width="16" height="16" fill="#c4c4c4" stroke="#666" />
            <path d="M5 2V18M8 2V18M11 2V18M14 2V18M2 5H18M2 8H18M2 11H18M2 14H18" stroke="#777" />
        </NavIcon>
        <Caret />
        <NavIcon className="ml-px">
            <rect x="2" y="3" width="16" height="13" fill="#dbe7f3" stroke="#345" />
            <path d="M10 3V16M2 9.5H18" stroke="#345" />
            <rect x="4" y="5" width="4" height="3" fill="#7ea2c8" />
            <rect x="12" y="5" width="4" height="3" fill="#7ea2c8" />
            <rect x="4" y="11" width="4" height="3" fill="#7ea2c8" />
            <rect x="12" y="11" width="4" height="3" fill="#7ea2c8" />
        </NavIcon>
        <Caret />
        <NavCube fill wire={false} className="ml-[12px]" />
        <NavCube fill wire className="ml-[6px]" />
        <NavCube fill wire className="ml-[6px]" />
        <NavIcon className="ml-[6px]">
            <polygon points="10,2 17,6 17,14 10,18 3,14 3,6" fill="none" stroke="#555" strokeWidth="0.9" />
            <path d="M3 6L17 14M17 6L3 14M10 2V18" stroke="#555" strokeWidth="0.9" />
        </NavIcon>
        <NavIcon className="ml-[6px]">
            <polygon points="10,2 17,6 17,14 10,18 3,14 3,6" fill="none" stroke="#666" strokeWidth="0.9" />
            <path d="M3 6L10 10L17 6M10 10V18" stroke="#999" strokeWidth="0.9" fill="none" />
            <path d="M3 14L10 10L17 14" stroke="#bbb" strokeWidth="0.9" fill="none" />
        </NavIcon>
        <NavCube fill={false} wire className="ml-[6px]" />
    </div>
);

const BANDS: [number, string][] = [
    [-500, "#3f70ba"],
    [520, "#4073bd"],
    [610, "#3c6cb5"],
    [670, "#4477c2"],
    [736, "#4376c0"],
    [820, "#4275c0"],
    [880, "#3c6bb3"],
    [960, "#3b6ab2"],
    [1020, "#4172bb"],
    [1060, "#4574bd"],
    [1110, "#3a69b2"],
    [1170, "#3b6bb4"],
    [1215, "#4475c3"],
    [1300, "#4477c6"],
    [1800, "#4679c8"],
];

const CONE_PATH = "M921 243L653 643C636 670 625 695 625 722C628 790 720 879 943 879C1130 879 1286 790 1286 706C1286 680 1272 658 1258 638L953 243Z";
const BASE_PATH = "M625 722C628 790 720 879 943 879C1130 879 1286 790 1286 706";

const Cone = () => (
    <svg viewBox="0 137 1920 853" className="absolute inset-0 h-full w-full">
        <defs>
            <clipPath id="coneClip">
                <path d={CONE_PATH} />
            </clipPath>
            <clipPath id="edgeClip">
                <rect x="600" y="700" width="40" height="90" />
                <rect x="1255" y="680" width="50" height="100" />
            </clipPath>
            <filter id="soft" x="-10%" y="-10%" width="120%" height="120%">
                <feGaussianBlur stdDeviation="6" />
            </filter>
        </defs>
        <g clipPath="url(#coneClip)">
            <rect x="600" y="230" width="720" height="660" fill="#4074be" />
            <g filter="url(#soft)">
                {BANDS.slice(0, -1).map(([x, c], i) => (
                    <polygon key={x} points={`937,235 ${x},885 ${BANDS[i + 1][0]},885`} fill={c} />
                ))}
            </g>
        </g>
        <path d="M925 248L745 847" stroke="#0f4a9f" strokeWidth="2.5" />
        <path d="M857 482L832 568" stroke="#a9a69f" strokeWidth="1" opacity="0.6" />
        <path d="M832 569L748 848" stroke="#d8d6d0" strokeWidth="2.2" />
        <path d="M921 243L653 643C636 670 625 695 625 722" stroke="#a8a69e" strokeWidth="3.5" fill="none" />
        <path d="M953 243L1258 638C1272 658 1286 680 1286 706" stroke="#a8a69e" strokeWidth="3.5" fill="none" />
        <path d={BASE_PATH} stroke="#8d8d88" strokeWidth="1" fill="none" />
        <path d={BASE_PATH} stroke="#222" strokeWidth="1.2" fill="none" clipPath="url(#edgeClip)" />
        <ellipse cx="937" cy="242" rx="16" ry="8" fill="#c8c8c0" stroke="#111" strokeWidth="1.2" />
        <ellipse cx="937" cy="244" rx="12" ry="6" fill="#2d425c" />
        <text x="858" y="462" fontSize="15" fill="#2f5da8" opacity="0.55" fontFamily="Liberation Sans, sans-serif">90</text>
        <path d="M841 466L851 456V462H860V471H851V477Z" fill="none" stroke="#fff" strokeWidth="6" strokeLinejoin="round" />
        <path d="M841 466L851 456V462H860V471H851V477Z" fill="#08a8e4" stroke="#0b2b44" strokeWidth="1.4" strokeLinejoin="round" />
    </svg>
);

const ViewCube = () => (
    <svg viewBox="1810 137 110 120" className="absolute left-[1810px] top-0 h-[120px] w-[110px]">
        <defs>
            <filter id="cubeShadow">
                <feGaussianBlur stdDeviation="4" />
            </filter>
        </defs>
        <polygon points="1826,224 1862,243 1898,218 1884,208" fill="#777" filter="url(#cubeShadow)" />
        <polygon points="1821,182 1853,166 1890,177 1888,217 1860,240 1826,223" fill="#eeeeee" />
        <path d="M1821 182L1853 166L1890 177L1858 195ZM1858 195L1860 240M1890 177L1888 217L1860 240" fill="none" stroke="#bbb" strokeDasharray="5 3" />
        <path d="M1826 223L1819 175" stroke="#6060ff" strokeWidth="1.5" />
        <path d="M1826 223L1867 245" stroke="#ee7a7a" strokeWidth="2" />
        <text x="1813" y="170" fontSize="13" fill="#8a8aff" fontFamily="Liberation Sans, sans-serif" fontWeight="bold">Z</text>
        <text x="1869" y="251" fontSize="13" fill="#ff9a9a" fontFamily="Liberation Sans, sans-serif" fontWeight="bold">X</text>
        <text x="1829" y="218" fontSize="23" fill="#979797" fontFamily="Noto Sans CJK JP, sans-serif" transform="rotate(8 1840 208)">前</text>
        <text x="1864" y="213" fontSize="19" fill="#979797" fontFamily="Noto Sans CJK JP, sans-serif" transform="rotate(-20 1873 204)">右</text>
        <text x="1848" y="185" fontSize="14" fill="#979797" fontFamily="Noto Sans CJK JP, sans-serif" transform="rotate(-20 1855 179)">上</text>
    </svg>
);

const Ctl = ({ d }: { d: string }) => (
    <div className="flex w-[25px] justify-center">
        <svg width="14" height="16" viewBox="0 0 14 16" fill="#555">
            <path d={d} />
        </svg>
    </div>
);

const TL_ICON = (children: React.ReactNode, key: string) => (
    <div key={key} className="relative flex w-[24px] justify-center">
        <svg width="18" height="18" viewBox="0 0 18 18">
            {children}
        </svg>
    </div>
);

const SketchEdit = (
    <>
        <rect x="1.5" y="2" width="13" height="13" fill="none" stroke="#666" />
        {[[1, 1], [13, 1], [1, 14], [13, 14]].map(([x, y]) => (
            <rect key={`${x}${y}`} x={x} y={y} width="2" height="2" fill="#1d8fe0" />
        ))}
        <path d="M9 17L16 10" stroke="#f2b33c" strokeWidth="3" />
        <rect x="15" y="8.5" width="3" height="3" fill="#e44" />
    </>
);

const TIMELINE = [
    TL_ICON(SketchEdit, "t1"),
    TL_ICON(SketchEdit, "t2"),
    TL_ICON(
        <>
            <polygon points="1,1 17,1 17,11 12,15 6,15 1,11" fill="#e59c6c" />
            <polygon points="3,1 15,1 11,9 7,9" fill="#f3bd96" />
            <circle cx="9" cy="13" r="4" fill="#f4f4f4" stroke="#666" />
        </>,
        "t3"
    ),
    TL_ICON(
        <>
            <polygon points="1,5 6,1 6,17 1,17" fill="#e4e4e4" stroke="#666" strokeWidth="0.8" />
            <polygon points="6,5 11,1 11,13 6,17" fill="#61c17f" />
            <polygon points="12,5 17,1 17,13 12,17" fill="#e39a68" />
        </>,
        "t4"
    ),
    TL_ICON(
        <>
            <rect x="3" y="1" width="12" height="7" fill={B} stroke="#4a7ca8" />
            <path d="M1 9.5H17" stroke="#2a8ee6" />
            <rect x="3" y="11" width="12" height="6" fill="#f4f4f4" stroke="#666" />
        </>,
        "t5"
    ),
    TL_ICON(
        <>
            <rect x="1" y="1" width="9" height="9" fill="#fff" stroke="#2a6fc0" />
            <path d="M1 3L7 9M7 3L1 9" stroke="#d22" strokeWidth="2" />
            <rect x="7" y="7" width="10" height="10" fill="#f6d3b4" stroke="#c9622b" strokeWidth="1.4" />
            <rect x="4" y="10" width="3" height="4" fill="#111" />
        </>,
        "t6"
    ),
    TL_ICON(SketchEdit, "t7"),
    TL_ICON(
        <>
            <polygon points="1,5 5,1 15,1 12,5" fill={L} />
            <polygon points="12,5 15,1 15,13 12,15" fill={D} />
            <rect x="1" y="5" width="11" height="10" fill={B} />
            <polygon points="1,15 12,15 15,13 15,15 12,17 1,17" fill="#c4c4c4" />
            <path d="M17 14V3" stroke="#222" />
        </>,
        "t8"
    ),
    TL_ICON(
        <>
            <polygon points="1,10 11,2 17,6 7,14" fill="#f0f0f0" stroke="#666" />
            <polygon points="1,10 7,14 17,6 17,9 7,17 1,13" fill={B} />
        </>,
        "t9"
    ),
];

const Timeline = () => (
    <div className="flex h-[48px] items-center bg-[#f0f0f0] pb-[2px] pl-[4px]">
        <Ctl d="M0 0H3V16H0ZM14 0V16L3 8Z" />
        <Ctl d="M10 0V16L0 8ZM11 5H14V11H11Z" />
        <Ctl d="M1 0L14 8L1 16Z" />
        <Ctl d="M4 0V16L14 8ZM0 5H3V11H0Z" />
        <Ctl d="M0 0L11 8L0 16ZM11 0H14V16H11Z" />
        <div className="relative ml-[13px] flex">
            {TIMELINE}
            <div className="absolute left-[12px] top-[20px] flex h-[6px] w-[194px] justify-between border-x-2 border-b-2 border-[#cccccc]">
                {[1, 2, 3, 4, 5, 6, 7].map((n) => (
                    <div key={n} className="w-[2px] bg-[#cccccc]" />
                ))}
            </div>
            <div className="absolute left-[62px] -top-[5px] flex gap-[2px]">
                {[1, 2, 3].map((n) => (
                    <div key={n} className="h-[5px] w-[3px] skew-x-[-30deg] bg-[#555]" />
                ))}
            </div>
        </div>
        <svg width="12" height="32" viewBox="0 0 12 32" className="-ml-[6px]">
            <polygon points="0,0 12,0 12,3 7,10 7,32 5,32 5,10 0,3" fill="#555" />
        </svg>
        <FaCog size={16} color="#999" className="ml-auto mr-[13px]" />
    </div>
);

export default function App() {
    return (
        <div className="flex h-[1040px] w-[1920px] flex-col overflow-hidden bg-white font-['Liberation_Sans','Noto_Sans_CJK_JP',sans-serif] [font-feature-settings:'palt']">
            <TitleBar />
            <div className="h-[4px] bg-[#cccccc]" />
            <TabRow />
            <Ribbon />
            <main className="relative flex-1 bg-white">
                <Cone />
                <ViewCube />
                <BrowserPanel />
                <CommentPanel />
                <FeaturePanel />
                <BottomNav />
                <div className="absolute left-[1874px] top-[831px] h-[8px] w-[10px] border-[2px] border-t-[3px] border-[#333] bg-white" />
            </main>
            <div className="h-[3px] bg-[#cccccc]" />
            <Timeline />
        </div>
    );
}
